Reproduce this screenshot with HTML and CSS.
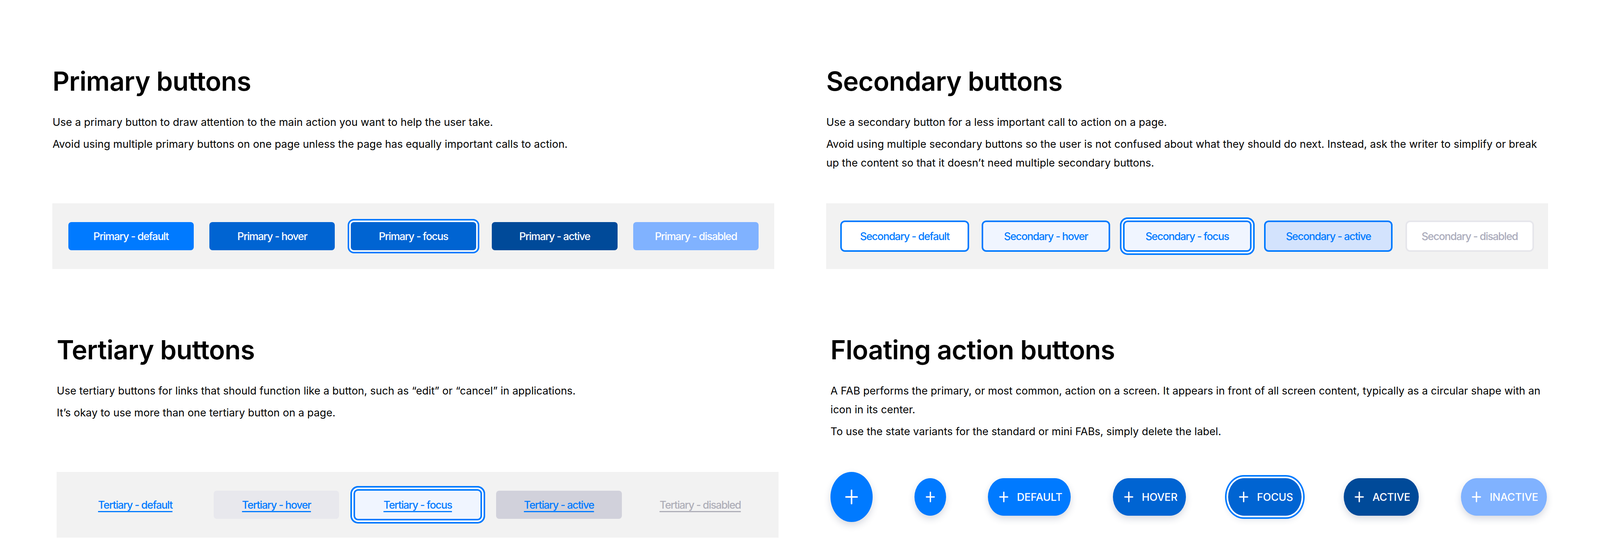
FILE: index.html
```html
<!DOCTYPE html>
<html lang="en">
<head>
<meta charset="utf-8">
<title>Buttons</title>
<link rel="stylesheet" href="styles.css">
</head>
<body>
<div class="page">
  <div class="row row-top">
    <section class="section">
      <h2 class="title">Primary buttons</h2>
      <div class="intro">
        <p>Use a primary button to draw attention to the main action you want to help the user take.</p>
        <p>Avoid using multiple primary buttons on one page unless the page has equally important calls to action.</p>
      </div>
      <div class="panel">
        <button class="btn primary">Primary - default</button>
        <button class="btn primary hover">Primary - hover</button>
        <button class="btn primary focus">Primary - focus</button>
        <button class="btn primary active">Primary - active</button>
        <button class="btn primary disabled">Primary - disabled</button>
      </div>
    </section>
    <section class="section">
      <h2 class="title">Secondary buttons</h2>
      <div class="intro">
        <p>Use a secondary button for a less important call to action on a page.</p>
        <p>Avoid using multiple secondary buttons so the user is not confused about what they should do next. Instead, ask the writer to simplify or break<br>up the content so that it doesn’t need multiple secondary buttons.</p>
      </div>
      <div class="panel">
        <button class="btn secondary">Secondary - default</button>
        <button class="btn secondary hover">Secondary - hover</button>
        <button class="btn secondary focus">Secondary - focus</button>
        <button class="btn secondary active">Secondary - active</button>
        <button class="btn secondary disabled">Secondary - disabled</button>
      </div>
    </section>
  </div>
  <div class="row row-bottom">
    <section class="section">
      <h2 class="title">Tertiary buttons</h2>
      <div class="intro">
        <p>Use tertiary buttons for links that should function like a button, such as “edit” or “cancel” in applications.</p>
        <p>It’s okay to use more than one tertiary button on a page.</p>
      </div>
      <div class="panel">
        <button class="btn tertiary"><span class="link">Tertiary - default</span></button>
        <button class="btn tertiary hover"><span class="link">Tertiary - hover</span></button>
        <button class="btn tertiary focus"><span class="link">Tertiary - focus</span></button>
        <button class="btn tertiary active"><span class="link">Tertiary - active</span></button>
        <button class="btn tertiary disabled"><span class="link">Tertiary - disabled</span></button>
      </div>
    </section>
    <section class="section">
      <h2 class="title">Floating action buttons</h2>
      <div class="intro">
        <p>A FAB performs the primary, or most common, action on a screen. It appears in front of all screen content, typically as a circular shape with an<br>icon in its center.</p>
        <p>To use the state variants for the standard or mini FABs, simply delete the label.</p>
      </div>
      <div class="fab-row">
        <button class="fab fab-large" aria-label="Add">
          <svg class="plus-lg" viewBox="0 0 38 38" preserveAspectRatio="none"><path d="M19 2v34M2 19h34"/></svg>
        </button>
        <button class="fab fab-mini" aria-label="Add">
          <svg class="plus-sm" viewBox="0 0 28 28" preserveAspectRatio="none"><path d="M14 2v24M2 14h24"/></svg>
        </button>
        <button class="fab fab-ext">
          <span class="fab-icon"><svg class="plus-sm" viewBox="0 0 28 28" preserveAspectRatio="none"><path d="M14 2v24M2 14h24"/></svg></span>
          <span class="fab-label">Default</span>
        </button>
        <button class="fab fab-ext hover">
          <span class="fab-icon"><svg class="plus-sm" viewBox="0 0 28 28" preserveAspectRatio="none"><path d="M14 2v24M2 14h24"/></svg></span>
          <span class="fab-label">Hover</span>
        </button>
        <button class="fab fab-ext focus">
          <span class="fab-icon"><svg class="plus-sm" viewBox="0 0 28 28" preserveAspectRatio="none"><path d="M14 2v24M2 14h24"/></svg></span>
          <span class="fab-label">Focus</span>
        </button>
        <button class="fab fab-ext active">
          <span class="fab-icon"><svg class="plus-sm" viewBox="0 0 28 28" preserveAspectRatio="none"><path d="M14 2v24M2 14h24"/></svg></span>
          <span class="fab-label">Active</span>
        </button>
        <button class="fab fab-ext inactive">
          <span class="fab-icon"><svg class="plus-sm" viewBox="0 0 28 28" preserveAspectRatio="none"><path d="M14 2v24M2 14h24"/></svg></span>
          <span class="fab-label">Inactive</span>
        </button>
      </div>
    </section>
  </div>
</div>
</body>
</html>
```

FILE: styles.css
```css
/* One design unit horizontally: the page is designed on a 4876px-wide canvas
   and scales its horizontal measures to the window width. */
:root {
  --ux: calc(100vw / 4876);
}

* {
  box-sizing: border-box;
}

html, body {
  margin: 0;
  padding: 0;
  background: #ffffff;
  overflow: hidden;
}

body {
  font-family: "Inter", "Liberation Sans", sans-serif;
  color: #000000;
}

.page {
  width: 100vw;
  height: 1376px;
  padding-top: 160px;
}

.row {
  display: flex;
  gap: calc(var(--ux) * 158);
}

.row-top {
  padding-left: calc(var(--ux) * 160);
}

.row-bottom {
  padding-left: calc(var(--ux) * 173);
  margin-top: 159px;
}

.section {
  flex: none;
  width: calc(var(--ux) * 2200);
  display: flex;
  flex-direction: column;
}

.title {
  margin: 0;
  font-size: calc(var(--ux) * 80);
  line-height: 96px;
  font-weight: 600;
  letter-spacing: calc(var(--ux) * -0.8);
  white-space: nowrap;
}

.intro {
  margin-top: 32px;
  height: 232px;
}

.intro p {
  margin: 0 0 8px;
  white-space: nowrap;
  font-size: calc(var(--ux) * 32);
  line-height: 48px;
  font-weight: 400;
  letter-spacing: calc(var(--ux) * 0.1);
}

.panel {
  display: flex;
  gap: calc(var(--ux) * 48);
  padding: 48px calc(var(--ux) * 48);
  background: #f2f2f2;
}

.btn {
  flex: 1 1 0;
  min-width: 0;
  height: 72px;
  border: none;
  border-radius: 8px;
  font-family: "Inter", "Liberation Sans", sans-serif;
  font-size: calc(var(--ux) * 32);
  font-weight: 500;
  letter-spacing: calc(var(--ux) * -1.7);
  white-space: nowrap;
  display: flex;
  align-items: center;
  justify-content: center;
  padding: 0;
  cursor: pointer;
}

/* Primary */
.primary {
  background: #007aff;
  color: #ffffff;
}
.primary.hover,
.primary.focus {
  background: #0064d2;
}
.primary.focus {
  box-shadow: 0 0 0 4px #ffffff, 0 0 0 8px #007aff;
}
.primary.active {
  background: #004a99;
}
.primary.disabled {
  background: #80b2ff;
}

/* Secondary */
.secondary {
  background: #ffffff;
  color: #007aff;
  box-shadow: 0 0 0 4px #007aff;
}
.secondary.hover,
.secondary.focus {
  background: #f0f5ff;
}
.secondary.focus {
  box-shadow: 0 0 0 4px #007aff, 0 0 0 8px #ffffff, 0 0 0 12px #007aff;
}
.secondary.active {
  background: #d3e3fd;
}
.secondary.disabled {
  background: #ffffff;
  color: #aaabbb;
  box-shadow: 0 0 0 4px #e6e6eb;
}

/* Tertiary */
.tertiary {
  background: transparent;
  color: #007aff;
}
.tertiary .link {
  text-decoration: underline;
  text-decoration-thickness: 3px;
  text-underline-offset: 6px;
}
.tertiary.hover {
  background: #e8e8ed;
}
.tertiary.focus {
  background: #f0f5ff;
  box-shadow: 0 0 0 4px #007aff, 0 0 0 8px #ffffff, 0 0 0 12px #007aff;
}
.tertiary.active {
  background: #d1d1db;
}
.tertiary.disabled {
  color: #aeaeb8;
}

/* Floating action buttons */
.fab-row {
  display: flex;
  align-items: center;
  gap: calc(var(--ux) * 128);
  height: 128px;
}

.fab {
  flex: none;
  border: none;
  padding: 0;
  background: #007aff;
  color: #ffffff;
  display: flex;
  align-items: center;
  justify-content: center;
  font-family: "Inter", "Liberation Sans", sans-serif;
  box-shadow: 0 8px 18px rgba(40, 50, 90, 0.18);
  cursor: pointer;
}

.fab-large {
  width: calc(var(--ux) * 128);
  height: 128px;
  border-radius: 50%;
}

.fab-mini {
  width: calc(var(--ux) * 96);
  height: 96px;
  border-radius: 50%;
}

.fab-ext {
  height: 96px;
  border-radius: calc(var(--ux) * 48) / 48px;
  padding: 0 calc(var(--ux) * 26) 0 calc(var(--ux) * 24);
  gap: calc(var(--ux) * 16);
}

.fab-icon {
  width: calc(var(--ux) * 48);
  height: 48px;
  display: flex;
  align-items: center;
  justify-content: center;
}

.fab-label {
  font-size: calc(var(--ux) * 32);
  font-weight: 500;
  text-transform: uppercase;
  letter-spacing: calc(var(--ux) * -0.2);
}

.fab.hover,
.fab.focus {
  background: #0064d2;
}
.fab.focus {
  box-shadow: 0 0 0 4px #ffffff, 0 0 0 8px #007aff, 0 8px 18px rgba(40, 50, 90, 0.18);
}
.fab.active {
  background: #004a99;
}
.fab.inactive {
  background: #80b2ff;
}

.plus-lg {
  width: calc(var(--ux) * 38);
  height: 38px;
}
.plus-sm {
  width: calc(var(--ux) * 28);
  height: 28px;
}
.plus-lg path,
.plus-sm path {
  fill: none;
  stroke: currentColor;
  stroke-linecap: round;
  vector-effect: non-scaling-stroke;
}
.plus-lg path {
  stroke-width: 4;
}
.plus-sm path {
  stroke-width: 3.4;
}
```
